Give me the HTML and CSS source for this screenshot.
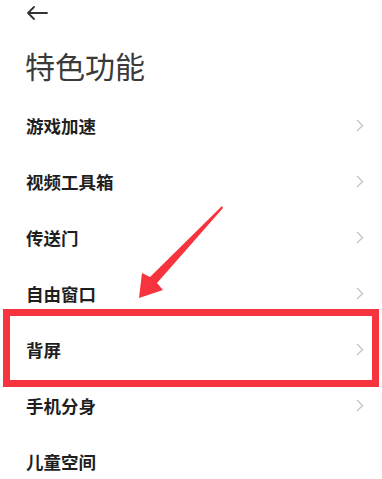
FILE: index.html
```html
<!DOCTYPE html>
<html lang="zh-CN">
<head>
<meta charset="utf-8">
<link rel="stylesheet" href="styles.css">
</head>
<body>
<div class="page">
  <div class="topbar">
    <svg class="back" width="22" height="14" viewBox="0 0 22 14"><path d="M21 7H2M8 1L2 7l6 6" fill="none" stroke="#333" stroke-width="1.8" stroke-linecap="round" stroke-linejoin="round"/></svg>
  </div>
  <h1 class="title">特色功能</h1>
  <ul class="list">
    <li class="row"><span class="label">游戏加速</span><svg class="chev" width="8" height="13" viewBox="0 0 8 13"><path d="M1 1l5.5 5.5L1 12" fill="none" stroke="#c4c4c4" stroke-width="1.4"/></svg></li>
    <li class="row"><span class="label">视频工具箱</span><svg class="chev" width="8" height="13" viewBox="0 0 8 13"><path d="M1 1l5.5 5.5L1 12" fill="none" stroke="#c4c4c4" stroke-width="1.4"/></svg></li>
    <li class="row"><span class="label">传送门</span><svg class="chev" width="8" height="13" viewBox="0 0 8 13"><path d="M1 1l5.5 5.5L1 12" fill="none" stroke="#c4c4c4" stroke-width="1.4"/></svg></li>
    <li class="row"><span class="label">自由窗口</span><svg class="chev" width="8" height="13" viewBox="0 0 8 13"><path d="M1 1l5.5 5.5L1 12" fill="none" stroke="#c4c4c4" stroke-width="1.4"/></svg></li>
    <li class="row"><span class="label">背屏</span><svg class="chev" width="8" height="13" viewBox="0 0 8 13"><path d="M1 1l5.5 5.5L1 12" fill="none" stroke="#c4c4c4" stroke-width="1.4"/></svg></li>
    <li class="row"><span class="label">手机分身</span><svg class="chev" width="8" height="13" viewBox="0 0 8 13"><path d="M1 1l5.5 5.5L1 12" fill="none" stroke="#c4c4c4" stroke-width="1.4"/></svg></li>
    <li class="row"><span class="label">儿童空间</span></li>
  </ul>
  <div class="highlight"></div>
  <svg class="pointer" width="382" height="479" viewBox="0 0 382 479"><polygon points="222,206 223,208 157,283 163,290 139,298 142,273 150,277" fill="#f7333d"/></svg>
</div>
</body>
</html>
```
FILE: styles.css
```css
html, body {
  margin: 0;
  padding: 0;
  background: #ffffff;
}
.page {
  position: relative;
  width: 382px;
  height: 479px;
  overflow: hidden;
  font-family: "Noto Sans CJK SC", "Noto Sans", sans-serif;
  color: #222;
}
.topbar {
  height: 26px;
  display: flex;
  align-items: center;
  padding-left: 26px;
}
.back {
  display: block;
}
.title {
  margin: 19px 0 0 0;
  padding-left: 25px;
  height: 40px;
  line-height: 40px;
  font-size: 30px;
  font-weight: 400;
  color: #3a3a3a;
}
.list {
  list-style: none;
  margin: 12px 0 0 0;
  padding: 0;
}
.row {
  height: 56px;
  display: flex;
  align-items: center;
  justify-content: space-between;
  padding: 0 18px 0 26px;
}
.label {
  font-size: 17.5px;
  font-weight: 600;
  color: #1f1f1f;
}
.chev {
  display: block;
}
.highlight {
  position: absolute;
  left: 3px;
  top: 309px;
  width: 362px;
  height: 64px;
  border: 7px solid #f7333d;
}
.pointer {
  position: absolute;
  left: 0;
  top: 0;
}
```
